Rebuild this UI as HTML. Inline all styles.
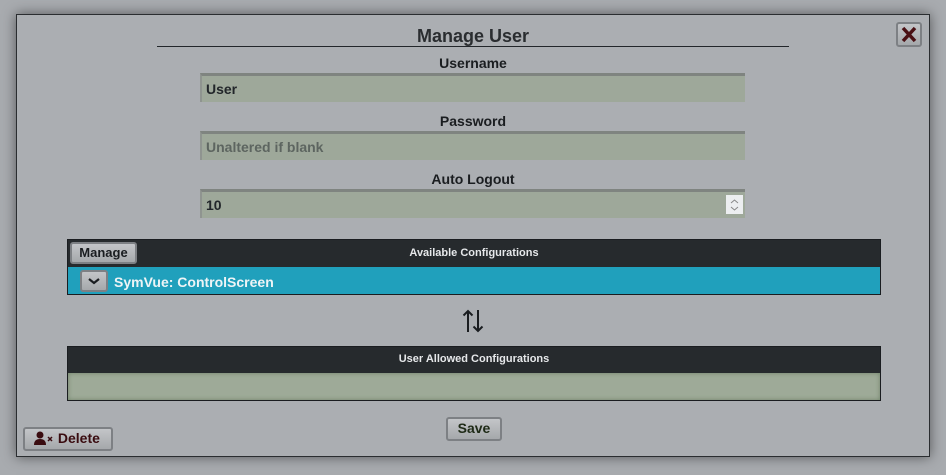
<!DOCTYPE html>
<html><head><style>
*{box-sizing:border-box;margin:0;padding:0}
body{width:946px;height:475px;background:#a8abaf;font-family:"Liberation Sans",sans-serif;position:relative;overflow:hidden}
.dlg{position:absolute;left:16px;top:14px;width:914px;height:443px;background:#abaeb2;border:1px solid #2a2d30;box-shadow:0 0 12px rgba(0,0,0,.5)}
.a{position:absolute}
.lbl{position:absolute;left:0;width:946px;text-align:center;font-weight:bold;font-size:14px;color:#1a1d20}
.inp{position:absolute;left:200px;width:545px;height:29px;background:#9ea89a;border-top:3px solid #7f8480;border-left:2px solid #8f9490;font-size:14px;font-weight:bold;color:#22262a;padding:5px 4px}
.btn{position:absolute;background:linear-gradient(#c3c5c8,#a5a8ab);border:2px solid #7d8084;border-radius:3px;font-weight:bold;font-size:14px;text-align:center}
</style></head><body>
<div class="dlg"></div>
<div class="lbl" style="top:26px;font-size:18px;color:#2a2d30">Manage User</div>
<div class="a" style="left:157px;top:46px;width:632px;height:1px;background:#22262a"></div>
<div class="btn" style="left:896px;top:22px;width:26px;height:25px;padding:0"><svg width="22" height="21" viewBox="0 0 22 21"><path d="M5 4L17 17M17 4L5 17" stroke="#4a1014" stroke-width="3.5"/></svg></div>
<div class="lbl" style="top:55px">Username</div>
<div class="inp" style="top:73px">User</div>
<div class="lbl" style="top:113px">Password</div>
<div class="inp" style="top:131px;color:#5d6560">Unaltered if blank</div>
<div class="lbl" style="top:171px">Auto Logout</div>
<div class="inp" style="top:189px">10<span class="a" style="right:2px;top:3px;width:17px;height:19px;background:#eceef0"><svg width="17" height="19"><path d="M5 8L8.5 5L12 8M5 12L8.5 15L12 12" stroke="#888" fill="none"/></svg></span></div>
<div class="a" style="left:67px;top:239px;width:814px;height:56px;background:#262a2d;border:1px solid #1a1d20"></div>
<div class="a" style="left:67px;top:247px;width:814px;text-align:center;color:#e6e8ea;font-size:11px;font-weight:bold">Available Configurations</div>
<div class="btn" style="left:70px;top:242px;width:67px;height:22px;font-size:13px;line-height:17px;color:#1a1d20">Manage</div>
<div class="a" style="left:68px;top:267px;width:812px;height:27px;background:#20a0bc"></div>
<div class="btn" style="left:80px;top:270px;width:28px;height:22px"><svg width="24" height="18"><path d="M7 7L12 11L17 7" stroke="#1a1d20" stroke-width="2.2" fill="none"/></svg></div>
<div class="a" style="left:114px;top:274px;color:#eef4f6;font-weight:bold;font-size:14px">SymVue: ControlScreen</div>
<svg class="a" style="left:462px;top:309px" width="22" height="24"><path d="M6 23V2M1.5 6.5L6 2L10.5 6.5M16 1V22M11.5 17.5L16 22L20.5 17.5" stroke="#1a1d20" stroke-width="2" fill="none"/></svg>
<div class="a" style="left:67px;top:346px;width:814px;height:55px;background:#262a2d;border:1px solid #1a1d20"></div>
<div class="a" style="left:67px;top:353px;width:814px;text-align:center;color:#e6e8ea;font-size:11px;font-weight:bold">User Allowed Configurations</div>
<div class="a" style="left:68px;top:373px;width:812px;height:27px;background:#9eaa98;box-shadow:inset 0 0 5px #6f8268"></div>
<div class="btn" style="left:446px;top:417px;width:56px;height:24px;color:#1e2a16;line-height:19px">Save</div>
<div class="btn" style="left:23px;top:427px;width:90px;height:24px;color:#3a0c10;line-height:19px;text-align:left;padding-left:9px"><svg width="20" height="14" style="vertical-align:-2px"><circle cx="6" cy="4" r="3.5" fill="#3a0c10"/><path d="M0 14Q0 8 6 8Q12 8 12 14Z" fill="#3a0c10"/><path d="M14 6L18 10M18 6L14 10" stroke="#3a0c10" stroke-width="1.5"/></svg> Delete</div>
</body></html>
